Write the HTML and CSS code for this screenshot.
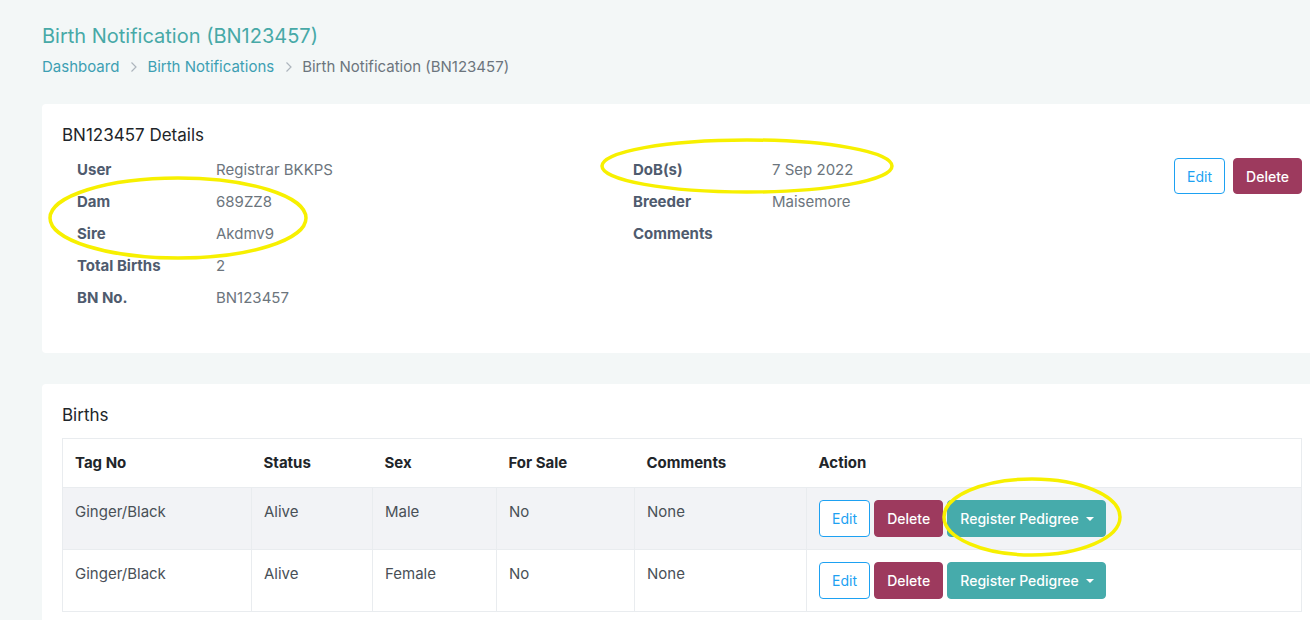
FILE: index.html
```html
<!DOCTYPE html>
<html lang="en">
<head>
    <meta charset="UTF-8">
    <meta name="viewport" content="width=device-width, initial-scale=1.0">
    <title>Birth Notification (BN123457)</title>
    <link rel="stylesheet" href="styles.css">
</head>
<body>
    <div class="page">
        <h4 class="page-title">Birth Notification (BN123457)</h4>
        <nav class="crumbs">
            <a href="#">Dashboard</a>
            <svg class="sep" width="8" height="12" viewBox="0 0 8 12"><path d="M1.5 1.5 L6 6 L1.5 10.5" /></svg>
            <a href="#">Birth Notifications</a>
            <svg class="sep" width="8" height="12" viewBox="0 0 8 12"><path d="M1.5 1.5 L6 6 L1.5 10.5" /></svg>
            <span class="current">Birth Notification (BN123457)</span>
        </nav>

        <div class="card details-card">
            <h5 class="card-title">BN123457 Details</h5>
            <div class="details">
                <div class="detail-col">
                    <div class="detail-row"><span class="label">User</span><span class="value">Registrar BKKPS</span></div>
                    <div class="detail-row"><span class="label">Dam</span><span class="value">689ZZ8</span></div>
                    <div class="detail-row"><span class="label">Sire</span><span class="value">Akdmv9</span></div>
                    <div class="detail-row"><span class="label">Total Births</span><span class="value">2</span></div>
                    <div class="detail-row"><span class="label">BN No.</span><span class="value">BN123457</span></div>
                </div>
                <div class="detail-col">
                    <div class="detail-row"><span class="label">DoB(s)</span><span class="value">7 Sep 2022</span></div>
                    <div class="detail-row"><span class="label">Breeder</span><span class="value">Maisemore</span></div>
                    <div class="detail-row"><span class="label">Comments</span><span class="value"></span></div>
                </div>
                <div class="detail-actions">
                    <button class="btn btn-outline">Edit</button>
                    <button class="btn btn-danger">Delete</button>
                </div>
            </div>
        </div>

        <div class="card births-card">
            <h5 class="card-title">Births</h5>
            <table class="births">
                <colgroup>
                    <col style="width:189px">
                    <col style="width:121px">
                    <col style="width:124px">
                    <col style="width:138px">
                    <col style="width:172px">
                    <col>
                </colgroup>
                <thead>
                    <tr>
                        <th>Tag No</th>
                        <th>Status</th>
                        <th>Sex</th>
                        <th>For Sale</th>
                        <th>Comments</th>
                        <th>Action</th>
                    </tr>
                </thead>
                <tbody>
                    <tr class="striped">
                        <td>Ginger/Black</td>
                        <td>Alive</td>
                        <td>Male</td>
                        <td>No</td>
                        <td>None</td>
                        <td class="actions">
                            <button class="btn btn-outline">Edit</button>
                            <button class="btn btn-danger">Delete</button>
                            <button class="btn btn-teal">Register Pedigree <span class="caret"></span></button>
                        </td>
                    </tr>
                    <tr>
                        <td>Ginger/Black</td>
                        <td>Alive</td>
                        <td>Female</td>
                        <td>No</td>
                        <td>None</td>
                        <td class="actions">
                            <button class="btn btn-outline">Edit</button>
                            <button class="btn btn-danger">Delete</button>
                            <button class="btn btn-teal">Register Pedigree <span class="caret"></span></button>
                        </td>
                    </tr>
                </tbody>
            </table>
        </div>
    </div>

    <!-- yellow highlight marks drawn over the page -->
    <svg class="marks" width="1310" height="620" viewBox="0 0 1310 620">
        <ellipse cx="178" cy="218" rx="128" ry="40" />
        <ellipse cx="747" cy="166" rx="145" ry="26" />
        <ellipse cx="1032" cy="517" rx="88" ry="38" />
    </svg>
</body>
</html>
```

FILE: styles.css
```css
html, body {
    overflow: hidden;
}
body {
    margin: 0;
    background-color: #f3f7f7;
    font-family: 'Inter', 'Noto Sans', sans-serif;
    color: #495057;
    font-size: 15px;
}
.page {
    padding: 23px 0 0 42px;
    width: 1280px;
}
.page-title {
    margin: 0;
    font-size: 20px;
    line-height: 26px;
    font-weight: 400;
    color: #47a9a7;
}
.crumbs {
    margin-top: 7px;
    font-size: 15px;
    line-height: 22px;
    display: flex;
    align-items: center;
}
.crumbs a {
    color: #3d9fb3;
    text-decoration: none;
}
.crumbs .sep {
    margin: 0 9px 0 11px;
}
.crumbs .sep path {
    fill: none;
    stroke: #adb5bd;
    stroke-width: 1.2;
}
.crumbs .current {
    color: #6c757d;
}
.card {
    background-color: #fff;
    border-radius: 4px;
    padding: 20px;
    box-sizing: border-box;
}
.details-card {
    margin-top: 26px;
    height: 249px;
}
.births-card {
    margin-top: 31px;
    height: 260px;
}
.card-title {
    margin: 0;
    padding-top: 1px;
    font-size: 17px;
    line-height: 20px;
    font-weight: 400;
    color: #212529;
}
.details {
    display: grid;
    grid-template-columns: 556px 1fr auto;
    margin-top: 8px;
}
.detail-col {
    padding-left: 15px;
}
.detail-row {
    display: flex;
    height: 32px;
    align-items: center;
}
.label {
    width: 139px;
    font-weight: 700;
    color: #4f5b6e;
}
.value {
    color: #6c757d;
}
.detail-actions {
    display: flex;
    gap: 8px;
    margin-top: 5px;
    align-items: flex-start;
}
.btn {
    font-family: inherit;
    font-size: 14px;
    height: 36px;
    padding: 0 12px;
    border-radius: 4px;
    border: 1px solid transparent;
    cursor: pointer;
}
.btn-outline {
    background-color: #fff;
    border-color: #1da1f2;
    color: #1da1f2;
}
.btn-danger {
    background-color: #9d3a5e;
    border-color: #9d3a5e;
    color: #fff;
    font-weight: 500;
}
.btn-teal {
    background-color: #46abab;
    border-color: #46abab;
    color: #fff;
    font-weight: 500;
    padding: 0 11px 0 12px;
}
.caret {
    display: inline-block;
    margin-left: 3px;
    vertical-align: 3px;
    border-top: 4px solid #fff;
    border-left: 4px solid transparent;
    border-right: 4px solid transparent;
}
.births {
    margin-top: 13px;
    width: 1240px;
    border-collapse: collapse;
    border: 1px solid #e9ecef;
    table-layout: fixed;
}
.births th {
    text-align: left;
    font-weight: 700;
    color: #212529;
    padding: 12px 12px;
    line-height: 24px;
    border-bottom: 1px solid #e9ecef;
}
.births td {
    vertical-align: top;
    padding: 12px 12px;
    line-height: 24px;
    color: #495057;
    border: 1px solid #e9ecef;
}
.births tr.striped td {
    background-color: #f2f3f6;
}
.births td.actions {
    padding: 12px;
    line-height: normal;
    white-space: nowrap;
}
.births td.actions .btn {
    height: 37px;
}
.marks {
    position: absolute;
    left: 0;
    top: 0;
    pointer-events: none;
}
.marks ellipse {
    fill: none;
    stroke: #f7f000;
    stroke-width: 3.5;
}
```
